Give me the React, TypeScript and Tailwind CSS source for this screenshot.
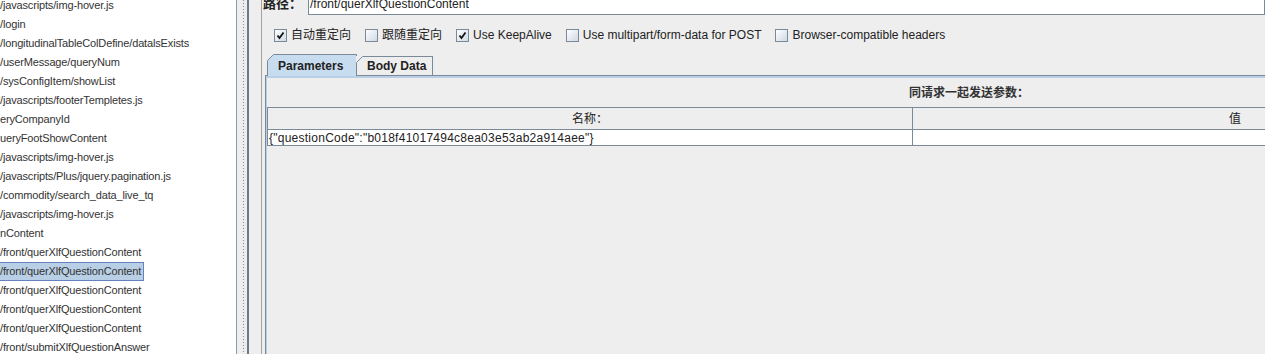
import React from "react";

const FONT = { fontFamily: '"Liberation Sans", "Noto Sans CJK SC", sans-serif' };

const TREE = [
  "/javascripts/img-hover.js",
  "/login",
  "/longitudinalTableColDefine/datalsExists",
  "/userMessage/queryNum",
  "/sysConfigItem/showList",
  "/javascripts/footerTempletes.js",
  "eryCompanyId",
  "ueryFootShowContent",
  "/javascripts/img-hover.js",
  "/javascripts/Plus/jquery.pagination.js",
  "/commodity/search_data_live_tq",
  "/javascripts/img-hover.js",
  "nContent",
  "/front/querXlfQuestionContent",
  "/front/querXlfQuestionContent",
  "/front/querXlfQuestionContent",
  "/front/querXlfQuestionContent",
  "/front/querXlfQuestionContent",
  "/front/submitXlfQuestionAnswer",
];

const SELECTED = 14;

function Check({ on, label }: { on: boolean; label: string }) {
  return (
    <div className="flex items-center">
      <div className="w-[13px] h-[13px] border border-[#7a8a99] bg-gradient-to-br from-white to-[#cfd9e4] grid place-items-center">
        {on && (
          <svg width="9" height="9" viewBox="0 0 9 9">
            <path d="M1.5 4.5 L3.5 7 L7.5 1.5" fill="none" stroke="#111" strokeWidth="1.8" />
          </svg>
        )}
      </div>
      <span className="ml-[4px] text-[12px] leading-[14px] text-[#222] whitespace-nowrap">{label}</span>
    </div>
  );
}

function Corner({ bg }: { bg: string }) {
  return (
    <svg className="absolute -left-px -top-px" width="7" height="7" viewBox="0 0 7 7">
      <polygon points="0,0 7,0 0,7" fill={bg} />
      <line x1="0.5" y1="6.5" x2="6.5" y2="0.5" stroke="#7a8a99" strokeWidth="1" />
    </svg>
  );
}

export default function App() {
  return (
    <div className="flex w-[1265px] h-[354px] overflow-hidden bg-[#eeeeee]" style={FONT}>
      {/* tree */}
      <div className="w-[236px] shrink-0 bg-white overflow-hidden">
        <div className="-mt-[4px]">
          {TREE.map((t, i) => (
            <div key={i} className="h-[19px] flex items-center">
              <span
                className={
                  "-ml-[2px] pl-[1px] pr-[2px] h-[19px] leading-[17px] text-[11px] tracking-[-0.15px] text-[#333] whitespace-nowrap border " +
                  (i === SELECTED ? "bg-[#b8cfe5] border-[#6382bf]" : "border-transparent")
                }
              >
                {t}
              </span>
            </div>
          ))}
        </div>
      </div>

      {/* splitter */}
      <div className="w-[13px] shrink-0 flex">
        <div className="w-px bg-[#8d9cab]" />
        <div className="w-[6px]" />
        <div className="w-px bg-[repeating-linear-gradient(to_bottom,#8a8a8a_0px,#8a8a8a_1px,transparent_1px,transparent_3px)]" />
        <div className="w-[3px]" />
        <div className="w-[2px] bg-[#6b7a8c]" />
      </div>

      {/* right */}
      <div className="flex-1 min-w-0 pl-[12px]">
        <div className="h-full border-l border-[#a3a3a3] overflow-hidden">
          {/* path */}
          <div className="-mt-[7px] h-[22px] flex items-center">
            <span className="ml-px w-[45px] text-[13px] font-bold text-[#222]">路径：</span>
            <div className="flex-1 h-[22px] bg-white border border-[#7a8a99] flex items-center pl-px">
              <span className="text-[12px] text-[#222] whitespace-nowrap">/front/querXlfQuestionContent</span>
            </div>
          </div>

          {/* options */}
          <div className="mt-[13px] pl-[12px] flex items-center gap-[14px]">
            <Check on label="自动重定向" />
            <Check on={false} label="跟随重定向" />
            <Check on label="Use KeepAlive" />
            <Check on={false} label="Use multipart/form-data for POST" />
            <Check on={false} label="Browser-compatible headers" />
          </div>

          {/* tabs */}
          <div className="mt-[12px] ml-[5px] flex items-end relative z-10 -mb-px">
            <div className="relative h-[22px] w-[90px] bg-[#c8dcf0] border-l border-t border-r border-[#7a8a99] flex items-center pl-[10px]">
              <Corner bg="#eeeeee" />
              <span className="text-[12px] font-bold text-[#222]">Parameters</span>
            </div>
            <div className="relative h-[20px] w-[77px] -ml-px bg-[#eeeeee] border border-[#7a8a99] flex items-center pl-[10px]">
              <Corner bg="#eeeeee" />
              <span className="text-[12px] font-bold text-[#222]">Body Data</span>
            </div>
          </div>

          {/* tab panel */}
          <div className="ml-[3px] h-full border-t border-l border-[#7a8a99]">
            <div className="h-full border-t-2 border-l border-[#b8cfe5]">
              <div className="w-[1404px] h-[29px] flex items-center justify-center">
                <span className="text-[12px] font-bold text-[#333]">同请求一起发送参数：</span>
              </div>
              <div className="w-[1290px] border-t border-l border-[#7a8a99]">
                <div className="flex h-[22px] border-b border-[#7a8a99]">
                  <div className="w-[645px] border-r border-[#7a8a99] flex items-center justify-center text-[12px] text-[#222]">
                    名称：
                  </div>
                  <div className="flex-1 flex items-center justify-center text-[12px] text-[#222]">值</div>
                </div>
                <div className="flex h-[16px] bg-white border-b border-[#7a8a99]">
                  <div className="w-[645px] border-r border-[#7a8a99] flex items-center pl-[1px] text-[12px] tracking-[0.25px] text-[#222] whitespace-nowrap">
                    {'{"questionCode":"b018f41017494c8ea03e53ab2a914aee"}'}
                  </div>
                  <div className="flex-1" />
                </div>
              </div>
            </div>
          </div>
        </div>
      </div>
    </div>
  );
}
